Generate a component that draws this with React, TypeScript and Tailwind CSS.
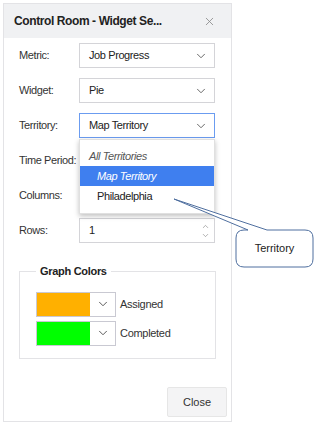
import { ChevronDown, ChevronUp, X } from "lucide-react"

const font = { fontFamily: '"Liberation Sans", Arial, sans-serif' }

function SelectBox({ value, focused }: { value: string; focused?: boolean }) {
  return (
    <div
      className={`flex h-[25px] w-[136px] items-center justify-between border pl-[9px] pr-[6px] text-[11px] tracking-[-0.4px] text-[#222] ${
        focused ? "border-[#6b9cf0]" : "border-[#d4d4d8]"
      }`}
    >
      <span>{value}</span>
      <ChevronDown size={14} strokeWidth={1.5} className="text-[#555]" />
    </div>
  )
}

function Row({ label, children }: { label: string; children: React.ReactNode }) {
  return (
    <div className="mb-[10px] flex h-[25px] items-center">
      <div className="w-[60px] whitespace-nowrap text-[11px] tracking-[-0.4px] text-[#333]">{label}</div>
      {children}
    </div>
  )
}

function ColorPick({ color, label }: { color: string; label: string }) {
  return (
    <div className="flex items-center">
      <div className="flex h-[25px] w-[80px] border border-[#c9c9d2]">
        <div className="w-[53px]" style={{ background: color }} />
        <div className="flex flex-1 items-center justify-center bg-white">
          <ChevronDown size={14} strokeWidth={1.5} className="text-[#444]" />
        </div>
      </div>
      <span className="ml-[4px] text-[11px] tracking-[-0.3px] text-[#333]">{label}</span>
    </div>
  )
}

export default function App() {
  return (
    <div className="relative h-[424px] w-[317px] overflow-hidden bg-white" style={font}>
      <div className="ml-[3px] mt-[3px] flex h-[419px] w-[229px] flex-col border border-[#e3e3e6] bg-white">
        <div className="flex h-[34px] items-center justify-between bg-[#f0f1f3] pl-[10px] pr-[15px]">
          <span className="text-[12px] font-bold tracking-[-0.4px] text-[#222]">Control Room - Widget Se...</span>
          <X size={13} strokeWidth={1.5} className="text-[#888]" />
        </div>

        <div className="px-[15px] pt-[5px]">
          <Row label="Metric:">
            <SelectBox value="Job Progress" />
          </Row>
          <Row label="Widget:">
            <SelectBox value="Pie" />
          </Row>
          <Row label="Territory:">
            <SelectBox value="Map Territory" focused />
          </Row>
          {/* these two sit under the open list */}
          <Row label="Time Period:">
            <SelectBox value="" />
          </Row>
          <Row label="Columns:">
            <SelectBox value="" />
          </Row>
          <Row label="Rows:">
            <div className="flex h-[25px] w-[136px] items-center justify-between border border-[#d4d4d8] pl-[9px] pr-[4px] text-[11px] text-[#222]">
              <span>1</span>
              <div className="flex flex-col items-center text-[#777]">
                <ChevronUp size={9} strokeWidth={1.5} />
                <ChevronDown size={9} strokeWidth={1.5} />
              </div>
            </div>
          </Row>

          <fieldset className="mt-[20px] h-[96px] w-[197px] border border-[#e3e3e6] pl-[16px] pr-[8px]">
            <legend className="px-[4px] text-[11px] font-bold tracking-[-0.3px] text-[#222]">Graph Colors</legend>
            <div className="mt-[12px] flex flex-col gap-[4px]">
              <ColorPick color="#ffb000" label="Assigned" />
              <ColorPick color="#00ff00" label="Completed" />
            </div>
          </fieldset>
        </div>

        <div className="mt-auto flex justify-end pb-[4px] pr-[4px]">
          <button className="h-[30px] w-[60px] rounded-[2px] border border-[#e6e6e6] bg-[#f4f4f5] text-[11px] text-[#333]">
            Close
          </button>
        </div>
      </div>

      {/* open territory list */}
      <div className="absolute left-[79px] top-[139px] w-[136px] border border-[#e0e0e0] bg-white py-[6px] text-[11px] tracking-[-0.4px] shadow-[0_2px_5px_rgba(0,0,0,0.25)]">
        <div className="flex h-[20px] items-center pl-[9px] italic text-[#555]">All Territories</div>
        <div className="flex h-[20px] items-center bg-[#3f7fef] pl-[17px] italic text-white">Map Territory</div>
        <div className="flex h-[21px] items-center pl-[17px] text-[#222]">Philadelphia</div>
      </div>

      {/* callout */}
      <svg className="absolute left-0 top-0" width="317" height="424">
        <path
          d="M244 230 L248 230 L174 199 L267 230 L305 230 Q313 230 313 238 L313 259 Q313 267 305 267 L244 267 Q236 267 236 259 L236 238 Q236 230 244 230 Z"
          fill="white"
          stroke="#4f6f9f"
          strokeWidth="1"
        />
      </svg>
      <div className="absolute left-[236px] top-[230px] flex h-[37px] w-[77px] items-center justify-center text-[11px] text-[#222]">
        Territory
      </div>
    </div>
  )
}
